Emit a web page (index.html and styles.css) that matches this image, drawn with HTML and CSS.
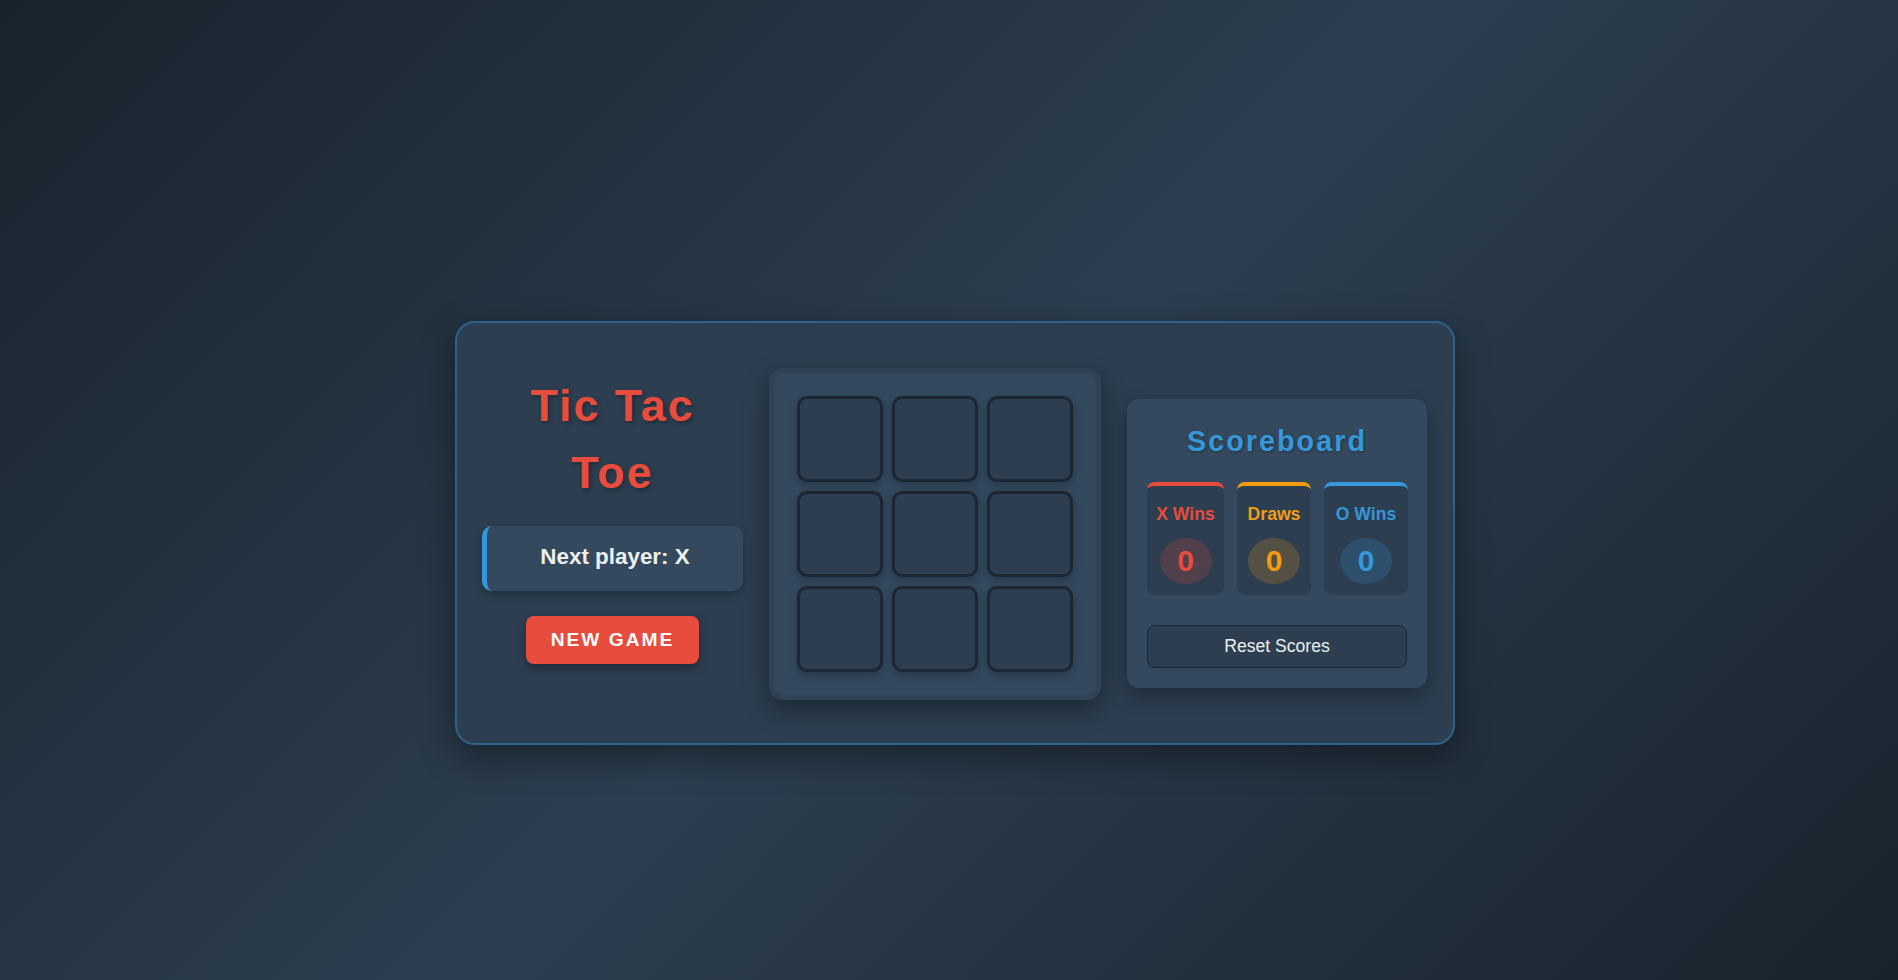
FILE: index.html
```html
<!DOCTYPE html>
<html lang="en">
<head>
<meta charset="UTF-8">
<title>Tic Tac Toe</title>
<link rel="stylesheet" href="styles.css">
</head>
<body>
<div class="page">
  <div class="game-card">
    <div class="info-col">
      <h1 class="title">Tic Tac<br>Toe</h1>
      <div class="status">Next player: X</div>
      <button class="new-game">New Game</button>
    </div>
    <div class="board">
      <div class="cell"></div><div class="cell"></div><div class="cell"></div>
      <div class="cell"></div><div class="cell"></div><div class="cell"></div>
      <div class="cell"></div><div class="cell"></div><div class="cell"></div>
    </div>
    <div class="scoreboard">
      <h2 class="score-title">Scoreboard</h2>
      <div class="score-row">
        <div class="score-card score-x">
          <div class="score-label">X Wins</div>
          <div class="score-value">0</div>
        </div>
        <div class="score-card score-draw">
          <div class="score-label">Draws</div>
          <div class="score-value">0</div>
        </div>
        <div class="score-card score-o">
          <div class="score-label">O Wins</div>
          <div class="score-value">0</div>
        </div>
      </div>
      <button class="reset">Reset Scores</button>
    </div>
  </div>
</div>
</body>
</html>
```

FILE: styles.css
```css
* { box-sizing: border-box; }

html, body {
  margin: 0;
  padding: 0;
  height: 100%;
}

body {
  font-family: "Liberation Sans", Arial, sans-serif;
  background: linear-gradient(135deg, #19232d 0%, #2c3e50 50%, #19232d 100%);
  color: #ecf0f1;
}

.page {
  height: 100vh;
  display: flex;
  align-items: center;
  justify-content: center;
  padding: 85px 0 0 12px;
}

.game-card {
  width: 1000px;
  display: flex;
  align-items: center;
  gap: 26px;
  padding: 45px 26px 43px 25px;
  background: #2c3e50;
  border: 2px solid #2f6288;
  border-radius: 20px;
  box-shadow: 0 12px 35px rgba(0, 0, 0, 0.4);
}

.info-col {
  width: 261px;
  flex: none;
  align-self: flex-start;
  margin-top: 4px;
  display: flex;
  flex-direction: column;
  align-items: center;
}

.title {
  margin: 0 0 20px;
  font-size: 44.8px;
  line-height: 1.5;
  font-weight: bold;
  letter-spacing: 2px;
  color: #e74c3c;
  text-align: center;
  text-shadow: 2px 2px 4px rgba(0, 0, 0, 0.3);
}

.status {
  width: 100%;
  padding: 18px 0 21px;
  background: #34495e;
  border-left: 5px solid #3498db;
  border-radius: 10px;
  font-size: 22.4px;
  font-weight: bold;
  text-align: center;
  color: #ecf0f1;
  box-shadow: 0 4px 10px rgba(0, 0, 0, 0.2);
}

.new-game {
  margin-top: 25px;
  padding: 13px 25px;
  border: none;
  border-radius: 8px;
  background: #e74c3c;
  color: #ffffff;
  font-family: "Liberation Sans", Arial, sans-serif;
  font-size: 19.2px;
  font-weight: bold;
  letter-spacing: 2px;
  text-transform: uppercase;
  box-shadow: 0 4px 10px rgba(0, 0, 0, 0.3);
}

.board {
  flex: none;
  width: 332px;
  height: 332px;
  display: grid;
  grid-template-columns: repeat(3, 86px);
  grid-template-rows: repeat(3, 86px);
  gap: 9px;
  padding: 23px;
  background: #34495e;
  border: 5px solid #2f4256;
  border-radius: 14px;
  box-shadow: 0 10px 25px rgba(0, 0, 0, 0.35);
}

.cell {
  background: #2c3e50;
  border: 3px solid #1c2733;
  border-radius: 10px;
  box-shadow: 0 3px 8px rgba(0, 0, 0, 0.25);
}

.scoreboard {
  flex: none;
  width: 300px;
  margin-top: 20px;
  padding: 20px;
  background: #34495e;
  border-radius: 12px;
  box-shadow: 0 8px 20px rgba(0, 0, 0, 0.3);
}

.score-title {
  margin: 6px 0 24px;
  font-size: 28.8px;
  font-weight: bold;
  letter-spacing: 2px;
  color: #3498db;
  text-align: center;
  text-shadow: 1px 1px 3px rgba(0, 0, 0, 0.3);
}

.score-row {
  display: grid;
  grid-template-columns: 77px 74px 84px;
  gap: 13px;
}

.score-card {
  display: flex;
  flex-direction: column;
  align-items: center;
  padding: 18px 0 11px;
  background: #2c3e50;
  border-top: 4px solid #e74c3c;
  border-radius: 8px;
}

.score-label {
  font-size: 17.6px;
  font-weight: bold;
  margin-bottom: 13px;
}

.score-value {
  width: 52px;
  height: 46px;
  border-radius: 50%;
  display: flex;
  align-items: center;
  justify-content: center;
  font-size: 30px;
  font-weight: bold;
}

.score-x { border-top-color: #e74c3c; }
.score-x .score-label, .score-x .score-value { color: #e74c3c; }
.score-x .score-value { background: rgba(231, 76, 60, 0.2); }

.score-draw { border-top-color: #f39c12; }
.score-draw .score-label, .score-draw .score-value { color: #f39c12; }
.score-draw .score-value { background: rgba(243, 156, 18, 0.2); }

.score-o { border-top-color: #3498db; }
.score-o .score-label, .score-o .score-value { color: #3498db; }
.score-o .score-value { background: rgba(52, 152, 219, 0.2); }

.reset {
  display: block;
  width: 100%;
  margin-top: 30px;
  padding: 10px 0;
  background: #2c3e50;
  border: 1px solid #1c2733;
  border-radius: 8px;
  color: #ecf0f1;
  font-family: "Liberation Sans", Arial, sans-serif;
  font-size: 17.6px;
}
```
